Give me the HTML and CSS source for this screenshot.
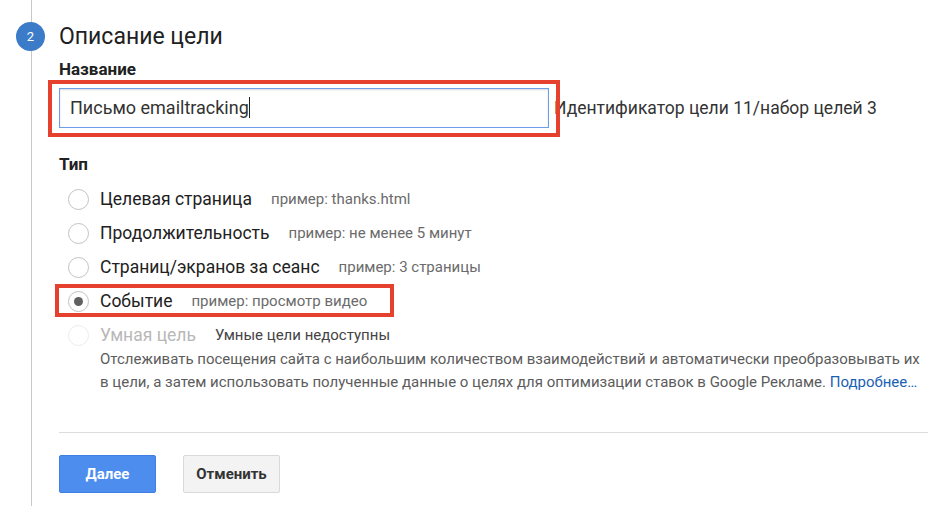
FILE: index.html
```html
<html>
  <head>
    <title>Описание цели</title>
    <link rel="stylesheet" href="styles.css">
  </head>
  <body>
    <div class="step">
      <div class="step-num">2</div>
      <h2 class="step-title">Описание цели</h2>

      <div class="field-label name-label">Название</div>
      <div class="name-row">
        <div class="name-box">
          <div class="name-input">Письмо emailtracking<span class="caret"></span></div>
          <div class="mark mark-name"></div>
        </div>
        <span class="goal-id">Идентификатор цели 11/набор целей 3</span>
      </div>

      <div class="field-label type-label">Тип</div>
      <ul class="types">
        <li class="type">
          <span class="radio"></span>
          <span class="type-name">Целевая страница</span>
          <span class="hint">пример: thanks.html</span>
        </li>
        <li class="type">
          <span class="radio"></span>
          <span class="type-name">Продолжительность</span>
          <span class="hint">пример: не менее 5 минут</span>
        </li>
        <li class="type">
          <span class="radio"></span>
          <span class="type-name">Страниц/экранов за сеанс</span>
          <span class="hint">пример: 3 страницы</span>
        </li>
        <li class="type selected">
          <span class="radio"></span>
          <span class="type-name">Событие</span>
          <span class="hint">пример: просмотр видео</span>
          <div class="mark mark-event"></div>
        </li>
        <li class="type disabled">
          <span class="radio"></span>
          <span class="type-name">Умная цель</span>
          <span class="hint">Умные цели недоступны</span>
        </li>
      </ul>
      <p class="smart-note">
        Отслеживать посещения сайта с наибольшим количеством взаимодействий и автоматически преобразовывать их<br>
        в цели, а затем использовать полученные данные о целях для оптимизации ставок в Google Рекламе. <a href="#">Подробнее…</a>
      </p>

      <div class="actions">
        <button class="btn btn-primary">Далее</button>
        <button class="btn">Отменить</button>
      </div>
    </div>
  </body>
</html>
```

FILE: styles.css
```css
body { margin: 0; background: #fff; font-family: Roboto, "Noto Sans", Arial, sans-serif; color: #212121; }

.step { position: relative; margin-left: 31px; border-left: 1px solid #c8c8c8; padding: 22px 11px 13px 27px; min-height: 471px; }
.step-num { position: absolute; left: -16px; top: 22px; width: 29px; height: 29px; border-radius: 50%; background: #3b7bc8; color: #fff; font-size: 13px; line-height: 29px; text-align: center; }
.step-title { margin: 0; font-size: 23px; font-weight: 400; line-height: 30px; color: #212121; }

.field-label { font-size: 17px; font-weight: 700; line-height: 20px; color: #212121; }
.name-label { margin-top: 7px; }
.type-label { margin-top: 26px; }

.name-row { display: flex; align-items: center; margin-top: 9px; }
.name-box { position: relative; }
.name-input { box-sizing: border-box; width: 490px; height: 40px; border: 1px solid #6d9eeb; box-shadow: inset 0 1px 2px rgba(0,0,0,0.15); padding: 0 10px; font-size: 18px; line-height: 38px; color: #333; }
.caret { display: inline-block; width: 1px; height: 21px; background: #222; vertical-align: -4px; }
.goal-id { margin-left: 5px; font-size: 17.5px; color: #333; }

.mark { position: absolute; border: 4px solid #e5412e; pointer-events: none; }
.mark-name { left: -11px; top: -8px; right: -11px; bottom: -9px; }
.mark-event { left: -4px; top: 0; width: 331px; bottom: 1px; }

.types { list-style: none; margin: 8px 0 0; padding: 0; }
.type { position: relative; display: flex; align-items: center; height: 34px; padding-left: 9px; }
.radio { box-sizing: border-box; width: 21px; height: 21px; border-radius: 50%; border: 1px solid #c2c2c2; margin-right: 11px; display: flex; align-items: center; justify-content: center; }
.selected .radio::after { content: ""; width: 9px; height: 9px; border-radius: 50%; background: #616161; }
.type-name { font-size: 17.5px; color: #212121; }
.hint { margin-left: 19px; font-size: 15px; color: #6b6b6b; }
.disabled .radio { border-color: #ececec; }
.disabled .type-name { color: #b8b8b8; }
.disabled .hint { color: #444; }

.smart-note { margin: -4px 0 0 41px; font-size: 15px; line-height: 23px; color: #5c5c5c; white-space: nowrap; }
.smart-note a { color: #1a5fb4; text-decoration: none; }

.actions { display: flex; gap: 27px; margin-top: 38px; border-top: 1px solid #dcdcdc; padding-top: 22px; }
.btn { box-sizing: border-box; width: 97px; height: 38px; border-radius: 2px; border: 1px solid #d9d9d9; background: #f3f3f3; font-family: Roboto, Arial, sans-serif; font-size: 15px; font-weight: 700; color: #333; }
.btn-primary { background: #4d8ded; border-color: #3f7fdf; color: #fff; }
```
